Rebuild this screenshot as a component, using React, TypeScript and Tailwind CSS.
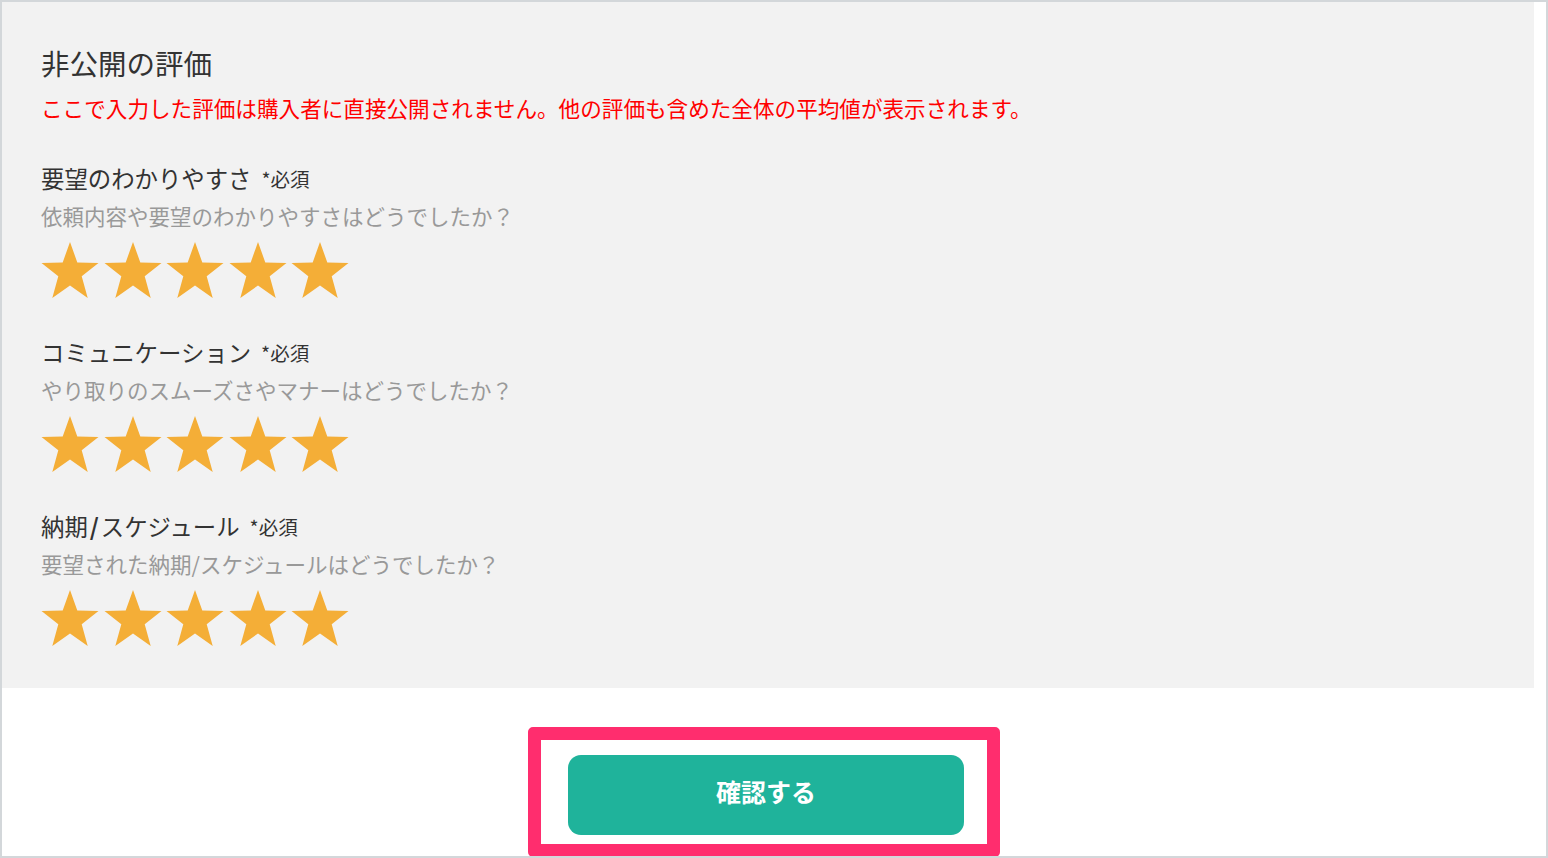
const font = { fontFamily: '"Noto Sans CJK JP", "Noto Sans", sans-serif' };

const sections = [
  { label: ["要望のわかりやすさ"], question: "依頼内容や要望のわかりやすさはどうでしたか？" },
  { label: ["コミュニケーション"], question: "やり取りのスムーズさやマナーはどうでしたか？" },
  { label: ["納期", "/", "スケジュール"], question: "要望された納期/スケジュールはどうでしたか？" },
];

function Star() {
  return (
    <svg width="58" height="56" viewBox="0 0 58 56">
      <polygon
        points="29,0 36.3,20.4 57.5,21 40.7,34.2 46.7,56 29,43.5 11.3,56 17.3,34.2 0.5,21 21.7,20.4"
        fill="#f4ae37"
      />
    </svg>
  );
}

function Rating({ label, question }: { label: string[]; question: string }) {
  return (
    <div className="flex flex-col">
      <div className="flex items-end h-[34px]">
        <span className="text-[23.4px] leading-[34px] text-[#333]">
          {label.map((part, i) =>
            part === "/" ? (
              <span key={i} className="font-bold px-[2px]">
                /
              </span>
            ) : (
              <span key={i}>{part}</span>
            )
          )}
        </span>
        <span className="ml-[10px] text-[19.5px] leading-[32px] text-[#333]">*必須</span>
      </div>
      <p className="mt-[4px] text-[21.5px] leading-[34px] text-[#999]">{question}</p>
      <div className="mt-[9px] flex gap-[4.5px]">
        {[0, 1, 2, 3, 4].map((i) => (
          <Star key={i} />
        ))}
      </div>
    </div>
  );
}

export default function App() {
  return (
    <div style={font} className="w-[1548px] h-[858px] overflow-hidden border-2 border-[#d3d7da] bg-white">
      <div className="w-[1532px] bg-[#f2f2f2] pl-[39px] pt-[41px] pb-[42px]">
        <h2 className="text-[28.5px] leading-[40px] text-[#333]">非公開の評価</h2>
        <p className="mt-[9px] text-[21.6px] leading-[32px] text-[#ff0000]">
          ここで入力した評価は購入者に直接公開されません。他の評価も含めた全体の平均値が表示されます。
        </p>
        <div className="mt-[37px] flex flex-col gap-[37px]">
          {sections.map((s) => (
            <Rating key={s.question} label={s.label} question={s.question} />
          ))}
        </div>
      </div>
      <div className="pl-[526px] pt-[39px]">
        <div className="w-[472px] h-[130px] rounded-[5px] border-[13px] border-[#ff2d6e] bg-white px-[27px] pt-[15px]">
          <button className="w-[396px] h-[80px] rounded-[13px] bg-[#1fb39b] pb-[7px] text-white text-[25px] font-bold">
            確認する
          </button>
        </div>
      </div>
    </div>
  );
}
